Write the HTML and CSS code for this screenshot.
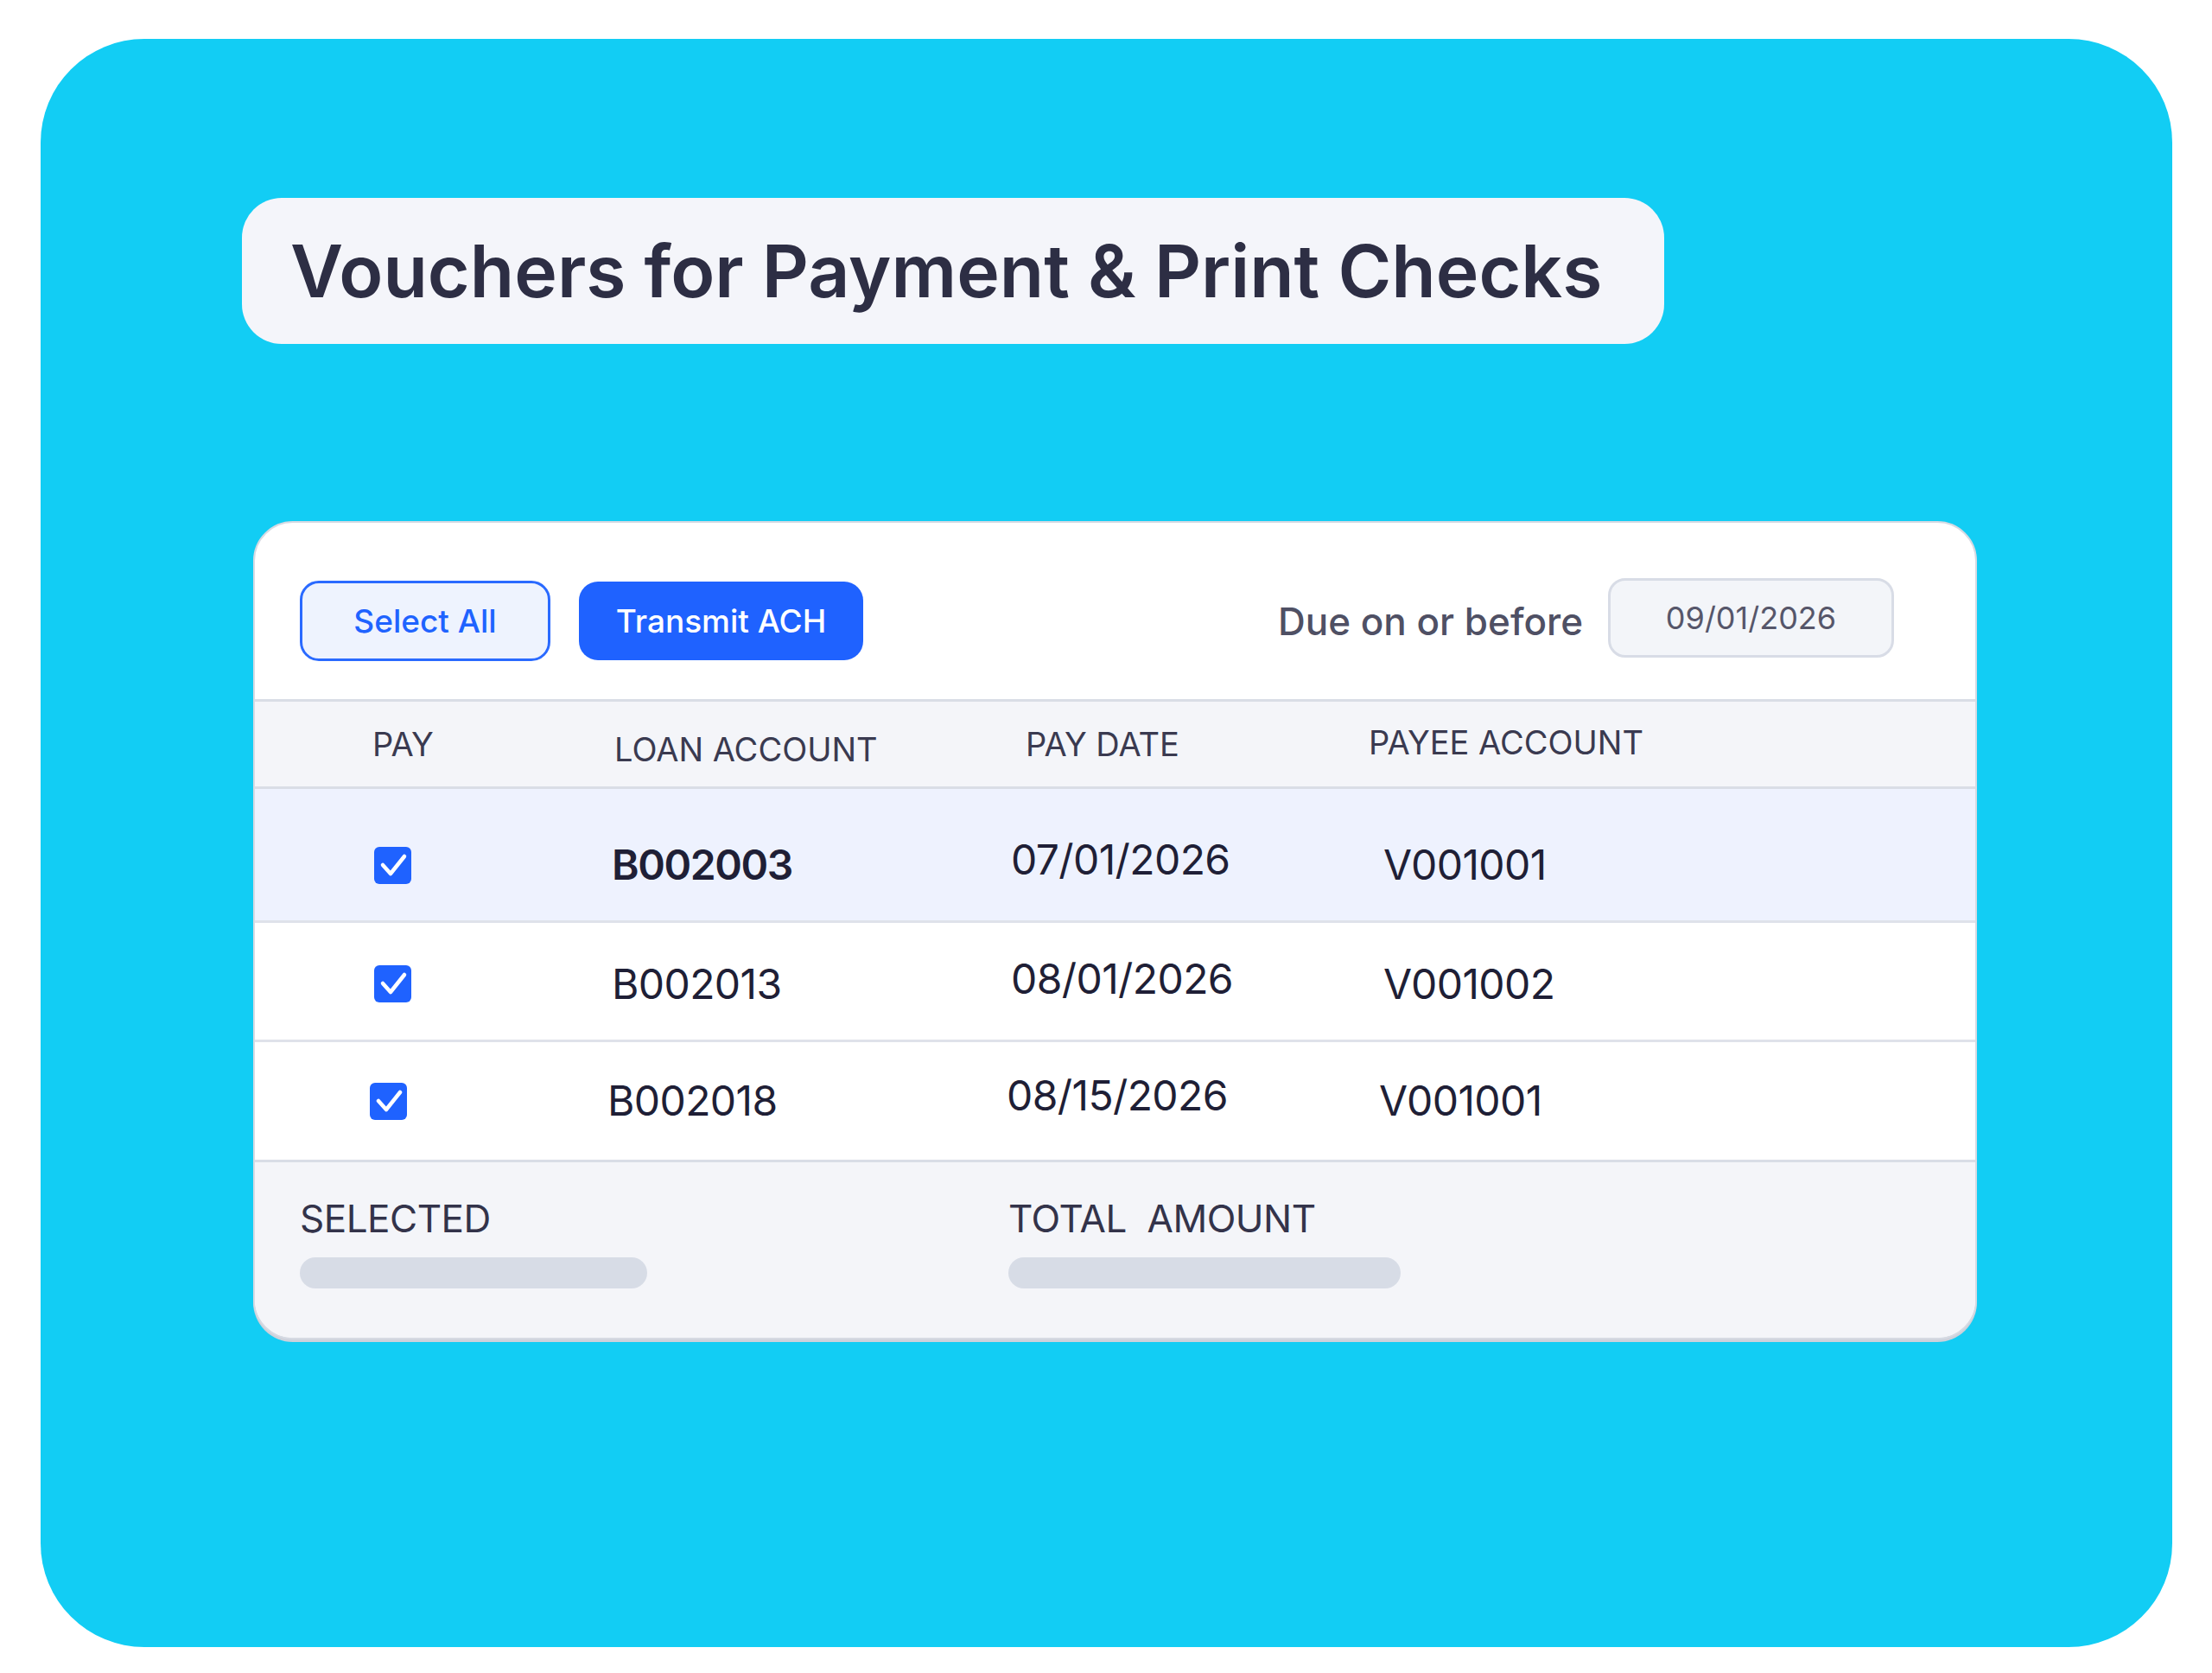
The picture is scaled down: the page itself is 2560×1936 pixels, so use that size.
FILE: index.html
```html
<!DOCTYPE html>
<html lang="en">

<head>
    <meta charset="UTF-8">
    <meta name="viewport" content="width=device-width, initial-scale=1.0">
    <title>Vouchers for Payment &amp; Print Checks</title>
    <link rel="stylesheet" href="styles.css">
</head>

<body>
    <div class="panel">
        <div class="title-box">
            <h1>Vouchers for Payment &amp; Print Checks</h1>
        </div>

        <div class="card">
            <!-- Actions and due date filter -->
            <div class="toolbar">
                <button class="btn btn-outline">Select All</button>
                <button class="btn btn-primary">Transmit ACH</button>
                <div class="due">
                    <span class="due-label">Due on or before</span>
                    <div class="date-input">09/01/2026</div>
                </div>
            </div>

            <div class="table-head">
                <span>PAY</span>
                <span class="head-loan">LOAN ACCOUNT</span>
                <span>PAY DATE</span>
                <span class="head-payee">PAYEE ACCOUNT</span>
            </div>

            <div class="row row-selected">
                <span class="check"><svg viewBox="0 0 43 43"><rect width="43" height="43" rx="6" /><path d="M10 21 L19 31 L35 11" /></svg></span>
                <span class="cell cell-strong">B002003</span>
                <span class="cell date">07/01/2026</span>
                <span class="cell">V001001</span>
            </div>
            <div class="row row-second">
                <span class="check"><svg viewBox="0 0 43 43"><rect width="43" height="43" rx="6" /><path d="M10 21 L19 31 L35 11" /></svg></span>
                <span class="cell">B002013</span>
                <span class="cell date">08/01/2026</span>
                <span class="cell">V001002</span>
            </div>
            <div class="row row-last">
                <span class="check"><svg viewBox="0 0 43 43"><rect width="43" height="43" rx="6" /><path d="M10 21 L19 31 L35 11" /></svg></span>
                <span class="cell">B002018</span>
                <span class="cell date">08/15/2026</span>
                <span class="cell">V001001</span>
            </div>

            <!-- Totals -->
            <div class="summary">
                <div>
                    <div class="summary-label">SELECTED</div>
                    <div class="bar bar-short"></div>
                </div>
                <div>
                    <div class="summary-label">TOTAL&nbsp; AMOUNT</div>
                    <div class="bar bar-long"></div>
                </div>
            </div>
        </div>
    </div>
</body>

</html>
```

FILE: styles.css
```css
body {
    margin: 0;
    background: #ffffff;
    font-family: Inter, "Noto Sans", sans-serif;
    color: #23233a;
}

.panel {
    box-sizing: border-box;
    width: 2467px;
    height: 1861px;
    margin: 45px 0 0 47px;
    padding: 184px 0 0 233px;
    background: #12cdf4;
    border-radius: 120px;
}

.title-box {
    box-sizing: border-box;
    width: 1646px;
    height: 169px;
    padding-left: 56px;
    display: flex;
    align-items: center;
    background: #f4f5fa;
    border-radius: 46px;
}

h1 {
    margin: 0;
    font-size: 84px;
    font-weight: 600;
    line-height: 1;
    color: #2d2e44;
}

.card {
    box-sizing: border-box;
    width: 1995px;
    height: 947px;
    margin: 205px 0 0 13px;
    background: #ffffff;
    border: 2px solid #d6dae3;
    border-radius: 46px;
    box-shadow: 0 3px 0 #cdd1db;
    overflow: hidden;
    display: flex;
    flex-direction: column;
}

.toolbar {
    display: flex;
    align-items: center;
    padding: 67px 94px 44px 52px;
}

.btn {
    box-sizing: border-box;
    height: 93px;
    border-radius: 22px;
    font-family: inherit;
    font-size: 37px;
    font-weight: 500;
    cursor: pointer;
}

.btn-outline {
    width: 290px;
    background: #eef3fe;
    border: 3px solid #2a6aff;
    color: #1f63ff;
}

.btn-primary {
    width: 329px;
    height: 91px;
    margin-left: 33px;
    background: #1f62ff;
    border: none;
    color: #ffffff;
}

.due {
    height: 93px;
    margin-left: auto;
    display: flex;
    align-items: center;
    gap: 29px;
}

.due-label {
    font-size: 44px;
    font-weight: 500;
    line-height: 1;
    color: #4f5064;
}

.date-input {
    box-sizing: border-box;
    width: 331px;
    height: 92px;
    margin-bottom: 8px;
    display: flex;
    align-items: center;
    justify-content: center;
    background: #f3f5f9;
    border: 3px solid #d8dce6;
    border-radius: 20px;
    font-size: 36px;
    line-height: 1;
    color: #56566a;
}

.table-head {
    height: 98px;
    display: grid;
    grid-template-columns: 280px 476px 397px auto;
    align-items: center;
    padding-left: 136px;
    background: #f4f5f9;
    border-top: 3px solid #d9dde6;
    border-bottom: 3px solid #d9dde6;
    font-size: 38px;
    line-height: 1;
    color: #3a3a50;
}

.head-loan {
    margin-top: 12px;
}

.head-payee {
    margin-bottom: 4px;
}

.row {
    box-sizing: border-box;
    display: grid;
    grid-template-columns: 275px 462px 431px auto;
    align-items: center;
    padding-left: 138px;
    border-bottom: 3px solid #dfe2ea;
}

.row-selected {
    height: 155px;
    padding-top: 24px;
    background: #eef2fe;
}

.row-second {
    height: 138px;
    padding-top: 6px;
}

.row-last {
    height: 136px;
    padding-left: 133px;
    border-bottom: none;
}

.check svg {
    display: block;
    width: 43px;
    height: 43px;
}

.check rect {
    fill: #1f62ff;
}

.check path {
    fill: none;
    stroke: #ffffff;
    stroke-width: 4.5;
    stroke-linecap: round;
    stroke-linejoin: round;
}

.cell {
    font-size: 48px;
    line-height: 1;
    letter-spacing: -0.6px;
    color: #1f1f36;
}

.cell-strong {
    font-weight: 600;
    letter-spacing: -1.4px;
}

.date {
    margin-bottom: 12px;
}

.summary {
    flex: 1;
    display: grid;
    grid-template-columns: 820px auto;
    padding: 43px 0 0 52px;
    background: #f4f5f9;
    border-top: 3px solid #d9dde6;
}

.summary-label {
    font-size: 44px;
    line-height: 1;
    letter-spacing: -0.5px;
    color: #33334a;
}

.bar {
    height: 36px;
    margin-top: 23px;
    background: #d7dce6;
    border-radius: 18px;
}

.bar-short {
    width: 402px;
}

.bar-long {
    width: 454px;
}
```
